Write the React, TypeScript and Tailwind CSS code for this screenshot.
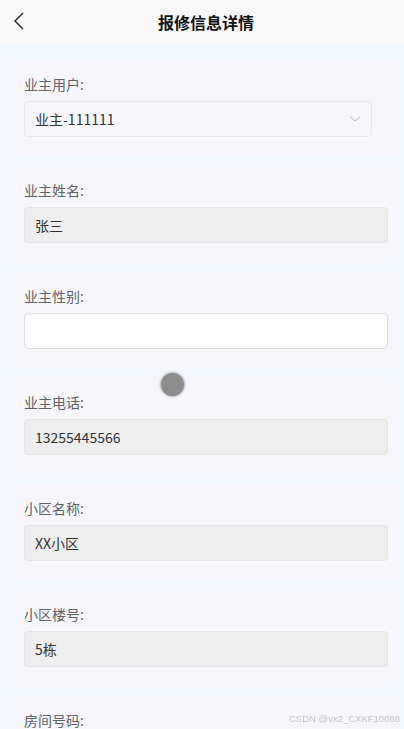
import React from "react";

const font = { fontFamily: '"Noto Sans CJK SC", "Noto Sans", sans-serif' };

function Field({ label, children }: { label: string; children: React.ReactNode }) {
  return (
    <div className="ml-[14px] mr-[8px] mb-[10px] bg-[#f7f6fb] pl-[10px] pr-[8px] pt-[14px] pb-[19px]">
      <div className="text-[14px] leading-[20px] text-[#606266] mb-[7px]">{label}</div>
      {children}
    </div>
  );
}

function Box({ value, white }: { value?: string; white?: boolean }) {
  return (
    <div
      className={
        "h-[36px] rounded-[4px] border flex items-center px-[10px] text-[14px] text-[#333] " +
        (white ? "bg-white border-[#dcdfe6]" : "bg-[#eeeeee] border-[#e4e4e4]")
      }
    >
      {value}
    </div>
  );
}

export default function App() {
  return (
    <div className="relative min-h-[729px] bg-[#f2f6fd]" style={font}>
      <div className="h-[44px] bg-[#f8f8f8] flex items-center justify-center relative">
        <svg className="absolute left-[12px] top-[11px]" width="14" height="20" viewBox="0 0 14 20">
          <path d="M11 2 L3 10 L11 18" fill="none" stroke="#222" strokeWidth="1.4" />
        </svg>
        <div className="pl-[8px] text-[16px] font-bold text-[#111]">报修信息详情</div>
      </div>
      <div className="pt-[16px]">
        <Field label="业主用户:">
          <div className="mr-[16px] h-[36px] rounded-[4px] border border-[#e4e7ed] bg-[#f7f6fb] flex items-center justify-between px-[10px] text-[14px] text-[#333]">
            <span>业主-111111</span>
            <svg width="12" height="8" viewBox="0 0 12 8">
              <path d="M1 1.5 L6 6 L11 1.5" fill="none" stroke="#b0b3b8" strokeWidth="1" />
            </svg>
          </div>
        </Field>
        <Field label="业主姓名:">
          <Box value="张三" />
        </Field>
        <Field label="业主性别:">
          <Box white />
        </Field>
        <Field label="业主电话:">
          <Box value="13255445566" />
        </Field>
        <Field label="小区名称:">
          <Box value="XX小区" />
        </Field>
        <Field label="小区楼号:">
          <Box value="5栋" />
        </Field>
        <Field label="房间号码:">
          <Box value="101" />
        </Field>
      </div>
      <div className="absolute left-[161px] top-[373px] w-[23px] h-[23px] rounded-full bg-[#8c8c8c] shadow-[0_0_2px_1px_rgba(140,140,140,0.6)]" />
      <div
        className="fixed right-[4px] top-[712px] text-[9.5px] leading-[14px] text-[#c4c4c4]"
        style={{ fontFamily: '"Liberation Sans", sans-serif' }}
      >
        CSDN @vx2_CXKF10088
      </div>
    </div>
  );
}
